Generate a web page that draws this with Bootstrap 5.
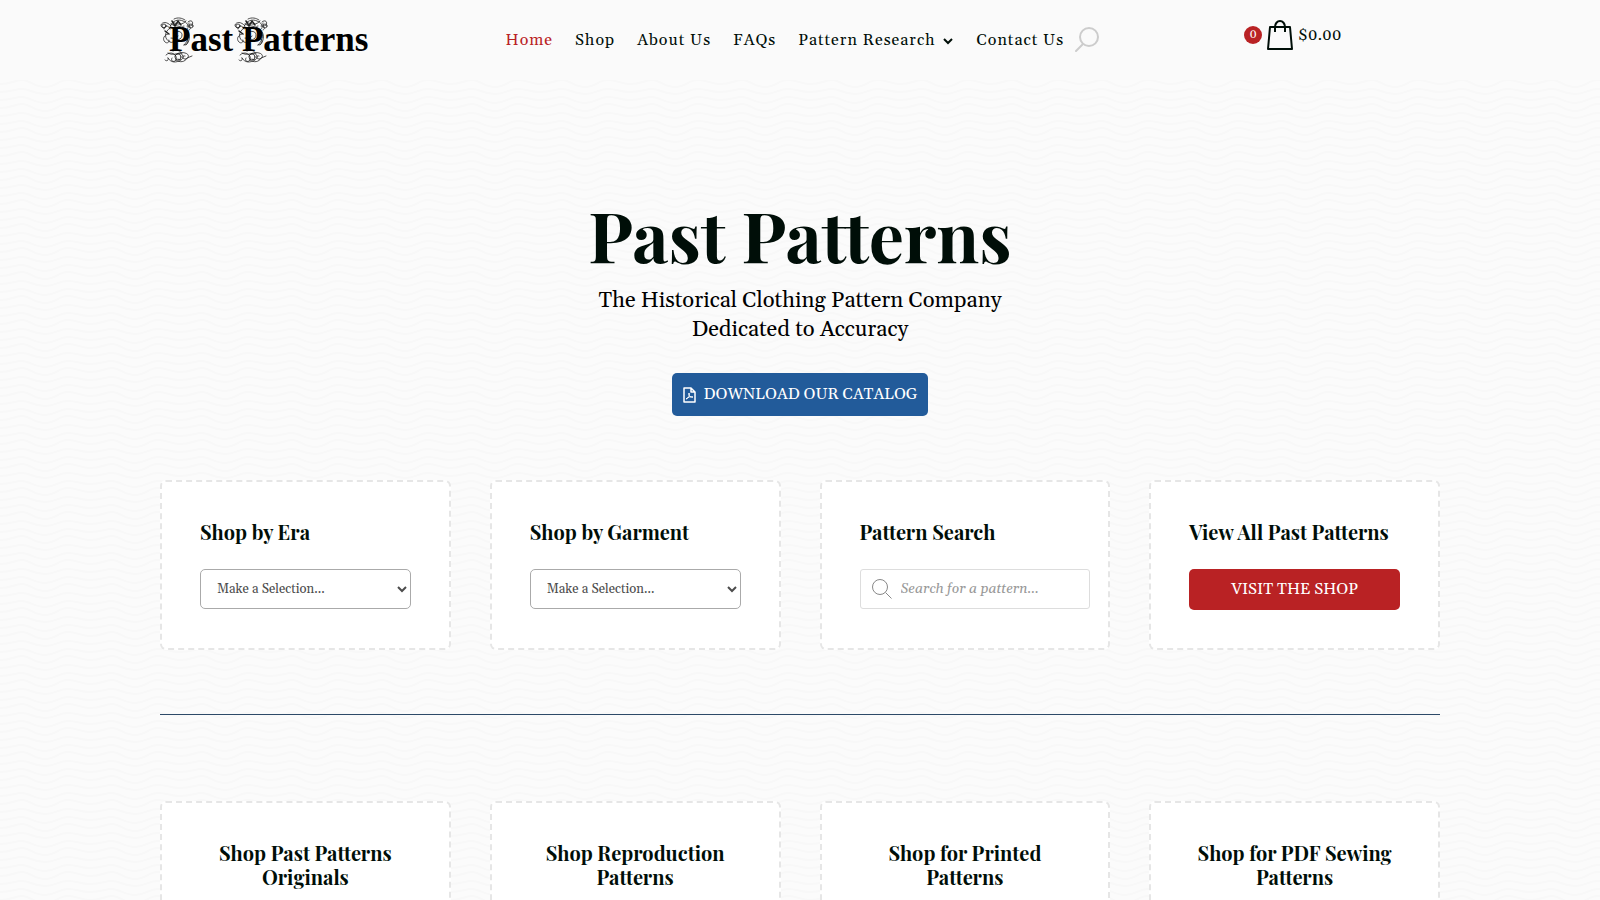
<!DOCTYPE html>
<html lang="en">
<head>
<meta charset="utf-8">
<meta name="viewport" content="width=device-width, initial-scale=1">
<title>Past Patterns</title>
<link href="https://cdn.jsdelivr.net/npm/bootstrap@5.3.0/dist/css/bootstrap.min.css" rel="stylesheet">
<style>
  :root { --ink: #000e08; --brand-red: #b92224; --brand-blue: #225b9a; }
  body {
    font-family: Georgia, Gelasio, "Liberation Serif", serif;
    color: var(--ink);
    background-color: #fbfbfb;
    background-image: url("data:image/svg+xml,%3Csvg xmlns='http://www.w3.org/2000/svg' width='90' height='24'%3E%3Cg fill='none' stroke='%23f8f8f8' stroke-width='2'%3E%3Cpath d='M0 4c12 0 14-3 22-3s12 6 23 6 13-6 23-6 12 3 22 3M0 12c12 0 14-4 22-4s12 7 23 7 13-7 23-7 12 4 22 4M0 20c12 0 14-3 22-3s12 5 23 5 13-5 23-5 12 3 22 3'/%3E%3C/g%3E%3C/svg%3E");
  }
  .page-width { width: 80%; margin-inline: auto; }
  .site-header { background: #fafafa; min-height: 80px; }
  .logo-col { width: 27%; }
  .cart-col { margin-left: 144px; }
  .menu-link { color: var(--ink); font-size: 16px; line-height: 24px; letter-spacing: 1px; text-decoration: none; white-space: nowrap; }
  .menu-link.active { color: var(--brand-red); }
  .menu-gap { gap: 22px; }
  .cart-count { width: 18px; height: 18px; font-size: 12px; line-height: 18px; background: var(--brand-red); color: #fff; }
  .cart-link { color: var(--ink); font-size: 16px; line-height: 24px; padding-bottom: 10px; font-variant-numeric: oldstyle-nums; }
  .display-face { font-family: "Playfair Display", "Liberation Serif", serif; font-weight: 700; }
  .hero { padding-top: 109px; padding-bottom: 64px; }
  .hero h1 { font-size: 70px; line-height: 90px; }
  .hero p { font-size: 22px; line-height: 29px; color: #000; }
  .btn-site { color: #fff; border: 0; border-radius: 5px; font-size: 16px; line-height: 23px; text-transform: uppercase; }
  .btn-catalog { background: var(--brand-blue); padding: 10px 11px; margin-top: 28px; }
  .btn-shop { background: var(--brand-red); height: 41px; }
  .tile-row { --bs-gutter-x: 39px; }
  .tile { background: #fff; border: 2px dashed #e6e6e6; border-radius: 6px; padding: 38px; }
  .tile h2 { font-size: 20px; line-height: 24px; margin-bottom: 25px; }
  .tile-tools { height: 170px; }
  .tile-tall { min-height: 260px; }
  .picker { height: 40px; padding: 0 12px; border: 1px solid #aaa; border-radius: 5px; background: #fff; color: #4c4c4c; font-size: 13px; }
  .finder { height: 40px; margin-right: -20px; border: 1px solid #ddd; border-radius: 3px; padding: 0 11px; gap: 9px; }
  .finder input { border: 0; outline: 0; min-width: 0; font-size: 14px; background: none; }
  .finder input::placeholder { color: #999; font-style: italic; opacity: 1; }
  .rule { border-top: 1px solid #2d4a68; margin: 64px 0 86px; opacity: 1; }
</style>
</head>
<body>
<header class="site-header d-flex align-items-center">
  <div class="page-width d-flex align-items-center">
    <div class="logo-col">
      <a href="#" aria-label="Past Patterns home">
        <svg width="220" height="48" viewBox="0 0 220 48" class="d-block">
          <defs>
            <g id="flourish" fill="none" stroke="#222" stroke-width=".8" stroke-linecap="round">
              <path d="M10 10c2-7 9-8 13-6 6 2 7 8 2 9-3 0-4-4-1-4M11 9C7 4 2 5 1 8c0 3 4 4 5 1M4 12c0-4 5-4 6 0M28 5c3-3 6 0 4 3-2 2-4 0-3-2M27 9c3-1 5 3 2 4"/>
              <path d="M10 11c-6 4-6 11 0 14 5 2 5-5 1-4M8 17c-4 1-6 5-3 8 2 2 5 0 4-2M13 5c4 3 10 3 13-1M14 2c4-2 8-1 11 1M11 7c4 3 8 1 13 4M24 11c7 4 7 12 2 17M27 14c3 5 1 10-3 14"/>
              <path d="M15 15c7-3 9 4 5 7-4 2-5-2-2-3M24 28c4 0 5-4 3-6M6 38c5-5 12 0 10 5-2 3-6 1-4-2M5 43c2 2 4 0 3-2M8 36c6 4 12-2 17 0 5 1 4 6 0 6-3 0-3-4 0-3M13 34c4-2 8 0 9 3M16 43c4 3 9 2 11-2l5-2M8 41c3 5 8 5 13 2M15 39c2-4 7-3 8 0s-3 5-5 3"/>
              <circle cx="31" cy="9" r="2"/><circle cx="4" cy="9" r="2"/><circle cx="18" cy="40" r="3"/>
              <path d="M12 4l3 5 3-5 3 4M5 14l4 3" stroke-width="1.500"/>
            </g>
          </defs>
          <use href="#flourish" y="1"/><use href="#flourish" x="74" y="1"/>
          <text x="9" y="35" font-family="Liberation Serif, serif" font-weight="700" font-size="35">Past Patterns</text>
        </svg>
      </a>
    </div>
    <nav class="d-flex align-items-center menu-gap" aria-label="Main">
      <a class="menu-link active" href="#">Home</a>
      <a class="menu-link" href="#">Shop</a>
      <a class="menu-link" href="#">About Us</a>
      <a class="menu-link" href="#">FAQs</a>
      <a class="menu-link d-flex align-items-center gap-1" href="#">Pattern Research
        <svg width="15" height="12" viewBox="0 0 15 12" fill="none" stroke="currentColor" stroke-width="2"><path d="M4 5l4 4 4-4"/></svg></a>
      <div class="d-flex align-items-center gap-2">
        <a class="menu-link" href="#">Contact Us</a>
        <button class="btn p-0 border-0 lh-1" aria-label="Search">
          <svg width="28" height="26" viewBox="0 0 28 26" fill="none" stroke="#ccc" stroke-width="2" stroke-linecap="round"><circle cx="17" cy="10" r="9"/><path d="M11 17l-7 7"/></svg>
        </button>
      </div>
    </nav>
    <a class="cart-col cart-link d-flex align-items-center text-decoration-none" href="#">
      <span class="cart-count rounded-circle text-center me-1">0</span>
      <svg class="me-1" width="28" height="30" viewBox="0 0 28 30" fill="none" stroke="currentColor" stroke-width="2" stroke-linejoin="round"><path d="M4 7h20l2 22H2zM9 12V7a5 6 0 0 1 10 0v5"/></svg>
      <span>$0.00</span>
    </a>
  </div>
</header>

<main class="page-width">
  <section class="hero text-center">
    <h1 class="display-face mb-0">Past Patterns</h1>
    <p class="mb-0 pt-2">The Historical Clothing Pattern Company<br>Dedicated to Accuracy</p>
    <button class="btn-site btn-catalog d-inline-flex align-items-center gap-2">
      <svg width="13" height="16" viewBox="0 0 13 16" fill="none" stroke="currentColor" stroke-width="1.500" stroke-linejoin="round"><path d="M1 1h7l4 4v10H1zM8 1v4h4"/><path d="M3 12c3-1 4-4 3-6-1 3 2 5 4 4-2-1-5 0-7 2" stroke-width="1"/></svg>
      Download our catalog
    </button>
  </section>

  <section class="row tile-row">
    <div class="col-3"><div class="tile tile-tools">
      <h2 class="display-face"><label for="era">Shop by Era</label></h2>
      <select id="era" class="picker w-100"><option>Make a Selection...</option></select>
    </div></div>
    <div class="col-3"><div class="tile tile-tools">
      <h2 class="display-face"><label for="garment">Shop by Garment</label></h2>
      <select id="garment" class="picker w-100"><option>Make a Selection...</option></select>
    </div></div>
    <div class="col-3"><div class="tile tile-tools">
      <h2 class="display-face"><label for="search">Pattern Search</label></h2>
      <div class="finder d-flex align-items-center">
        <svg class="flex-shrink-0" width="20" height="20" viewBox="0 0 20 20" fill="none" stroke="#888"><circle cx="8" cy="8" r="7.500"/><path d="M13.500 13.500l6 6"/></svg>
        <input id="search" type="text" class="flex-grow-1 p-0" placeholder="Search for a pattern...">
      </div>
    </div></div>
    <div class="col-3"><div class="tile tile-tools">
      <h2 class="display-face text-nowrap">View All Past Patterns</h2>
      <button class="btn-site btn-shop w-100">Visit the shop</button>
    </div></div>
  </section>

  <hr class="rule">

  <section class="row tile-row text-center">
    <div class="col-3"><div class="tile tile-tall"><h2 class="display-face">Shop Past Patterns Originals</h2></div></div>
    <div class="col-3"><div class="tile tile-tall"><h2 class="display-face">Shop Reproduction Patterns</h2></div></div>
    <div class="col-3"><div class="tile tile-tall"><h2 class="display-face">Shop for Printed Patterns</h2></div></div>
    <div class="col-3"><div class="tile tile-tall"><h2 class="display-face">Shop for PDF Sewing Patterns</h2></div></div>
  </section>
</main>
<script src="https://cdn.jsdelivr.net/npm/bootstrap@5.3.0/dist/js/bootstrap.bundle.min.js"></script>
</body>
</html>
